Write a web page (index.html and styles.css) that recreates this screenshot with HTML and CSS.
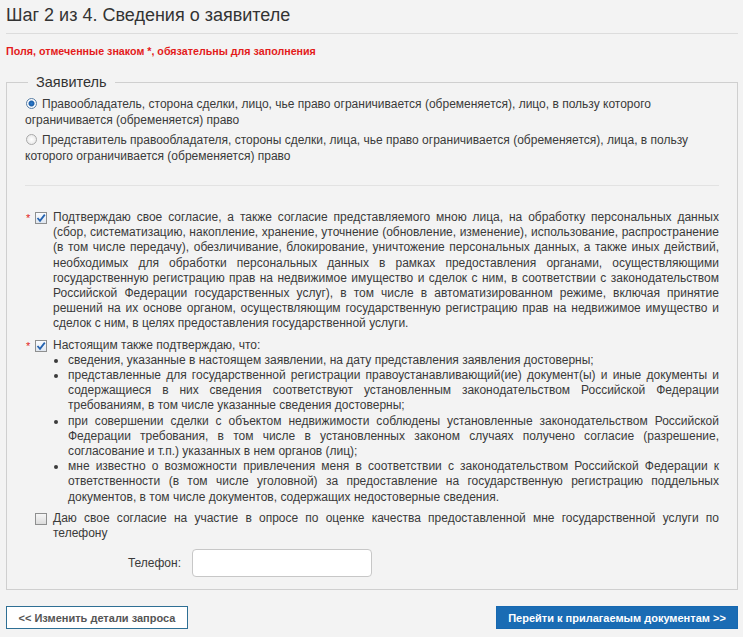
FILE: index.html
```html
<!DOCTYPE html>
<html lang="ru">
<head>
  <meta charset="UTF-8" />
  <title>Шаг 2 из 4. Сведения о заявителе</title>
  <link rel="stylesheet" href="styles.css">
</head>
<body>
  <h1>Шаг 2 из 4. Сведения о заявителе</h1>
  <div class="note">Поля, отмеченные знаком *, обязательны для заполнения</div>

  <fieldset class="applicant">
    <legend>Заявитель</legend>

    <div class="radio-row">
      <span class="radio checked"></span>Правообладатель, сторона сделки, лицо, чье право ограничивается (обременяется), лицо, в пользу которого ограничивается (обременяется) право
    </div>
    <div class="radio-row">
      <span class="radio"></span>Представитель правообладателя, стороны сделки, лица, чье право ограничивается (обременяется), лица, в пользу которого ограничивается (обременяется) право
    </div>

    <hr class="sep">

    <div class="consent">
      <span class="mark">*</span>
      <span class="box checked">
        <svg viewBox="0 0 12 12" width="12" height="12"><path d="M2.5 6 L5 8.8 L9.8 2.6" fill="none" stroke="#2563b0" stroke-width="1.8"/></svg>
      </span>
      <div class="consent-text">Подтверждаю свое согласие, а также согласие представляемого мною лица, на обработку персональных данных (сбор, систематизацию, накопление, хранение, уточнение (обновление, изменение), использование, распространение (в том числе передачу), обезличивание, блокирование, уничтожение персональных данных, а также иных действий, необходимых для обработки персональных данных в рамках предоставления органами, осуществляющими государственную регистрацию прав на недвижимое имущество и сделок с ним, в соответствии с законодательством Российской Федерации государственных услуг), в том числе в автоматизированном режиме, включая принятие решений на их основе органом, осуществляющим государственную регистрацию прав на недвижимое имущество и сделок с ним, в целях предоставления государственной услуги.</div>
    </div>

    <div class="consent">
      <span class="mark">*</span>
      <span class="box checked">
        <svg viewBox="0 0 12 12" width="12" height="12"><path d="M2.5 6 L5 8.8 L9.8 2.6" fill="none" stroke="#2563b0" stroke-width="1.8"/></svg>
      </span>
      <div class="consent-text">Настоящим также подтверждаю, что:
        <ul>
          <li>сведения, указанные в настоящем заявлении, на дату представления заявления достоверны;</li>
          <li>представленные для государственной регистрации правоустанавливающий(ие) документ(ы) и иные документы и содержащиеся в них сведения соответствуют установленным законодательством Российской Федерации требованиям, в том числе указанные сведения достоверны;</li>
          <li>при совершении сделки с объектом недвижимости соблюдены установленные законодательством Российской Федерации требования, в том числе в установленных законом случаях получено согласие (разрешение, согласование и т.п.) указанных в нем органов (лиц);</li>
          <li>мне известно о возможности привлечения меня в соответствии с законодательством Российской Федерации к ответственности (в том числе уголовной) за предоставление на государственную регистрацию поддельных документов, в том числе документов, содержащих недостоверные сведения.</li>
        </ul>
      </div>
    </div>

    <div class="consent survey">
      <span class="mark"></span>
      <span class="box"></span>
      <div class="consent-text">Даю свое согласие на участие в опросе по оценке качества предоставленной мне государственной услуги по телефону</div>
    </div>

    <div class="phone-row">
      <label for="phone">Телефон:</label>
      <input id="phone" type="text" class="phone-input">
    </div>
  </fieldset>

  <div class="buttons">
    <button class="btn btn-back">&lt;&lt; Изменить детали запроса</button>
    <button class="btn btn-next">Перейти к прилагаемым документам &gt;&gt;</button>
  </div>
</body>
</html>
```

FILE: styles.css
```css
body {
  margin: 0;
  padding: 0 5px 0 6px;
  background-color: #f3f3f3;
  color: #3a3a3a;
  font-family: 'Liberation Sans', Arial, sans-serif;
  font-size: 12px;
}
h1 {
  margin: 0;
  padding: 4px 0 7px;
  font-size: 18px;
  font-weight: normal;
  line-height: 22px;
  color: #333;
  border-bottom: 1px solid #dcdcdc;
}
.note {
  margin-top: 11px;
  color: #e31b1b;
  font-size: 10.7px;
  font-weight: bold;
}
.applicant {
  margin: 17px 0 0;
  padding: 6px 18px 12px 18px;
  border: 1px solid #cfcfcf;
  min-width: 0;
}
.applicant legend {
  margin-left: 3px;
  padding: 0 8px;
  font-size: 14.5px;
  color: #333;
}
.radio-row {
  line-height: 16px;
  margin-bottom: 4px;
}
.radio {
  display: inline-block;
  width: 11px;
  height: 11px;
  margin: 0 5px -1px 1px;
  border: 1px solid #a9a9a9;
  border-radius: 50%;
  background: radial-gradient(circle, #fff 0%, #e2e2e2 100%);
  box-sizing: border-box;
}
.radio.checked {
  border-color: #5a7fa6;
  background: radial-gradient(circle, #2a7bd0 0, #1d5fa8 2.5px, #fff 3.5px, #dde4ec 100%);
}
.sep {
  margin: 21px 0 24px;
  border: 0;
  border-top: 1px solid #e2e2e2;
}
.consent {
  display: flex;
  align-items: flex-start;
  margin: 0 0 6px 1px;
}
.mark {
  width: 9px;
  color: #e31b1b;
  font-size: 11px;
  line-height: 16px;
}
.box {
  display: inline-block;
  flex: none;
  width: 12px;
  height: 12px;
  margin: 2px 6px 0 0;
  border: 1px solid #8e8f8f;
  background: linear-gradient(#f6f6f6, #dcdcdc);
  box-sizing: border-box;
  position: relative;
}
.box.checked {
  background: linear-gradient(#fafcff, #dfe6ef);
}
.box svg {
  position: absolute;
  left: -1px;
  top: -1px;
}
.consent-text {
  flex: 1;
  text-align: justify;
  line-height: 15.2px;
}
.consent-text ul {
  margin: 0;
  padding-left: 15px;
}
.consent-text li {
  list-style: disc;
}
.survey {
  margin: 6px 0 8px 1px;
}
.phone-row {
  display: flex;
  align-items: center;
  gap: 11px;
}
.phone-row label {
  width: 156px;
  text-align: right;
}
.phone-input {
  width: 180px;
  height: 28px;
  box-sizing: border-box;
  border: 1px solid #c7c7c7;
  border-radius: 4px;
  background: #fff;
}
.buttons {
  display: flex;
  justify-content: space-between;
  margin-top: 16px;
}
.btn {
  height: 23px;
  padding: 0;
  white-space: nowrap;
  font-family: 'Liberation Sans', Arial, sans-serif;
  font-size: 11px;
  font-weight: bold;
  cursor: pointer;
}
.btn-back {
  width: 182px;
  border: 1px solid #2e6f94;
  background: #fff;
  color: #555;
}
.btn-next {
  width: 242px;
  border: 1px solid #1668b0;
  background: #1a6cb4;
  color: #fff;
}
```
